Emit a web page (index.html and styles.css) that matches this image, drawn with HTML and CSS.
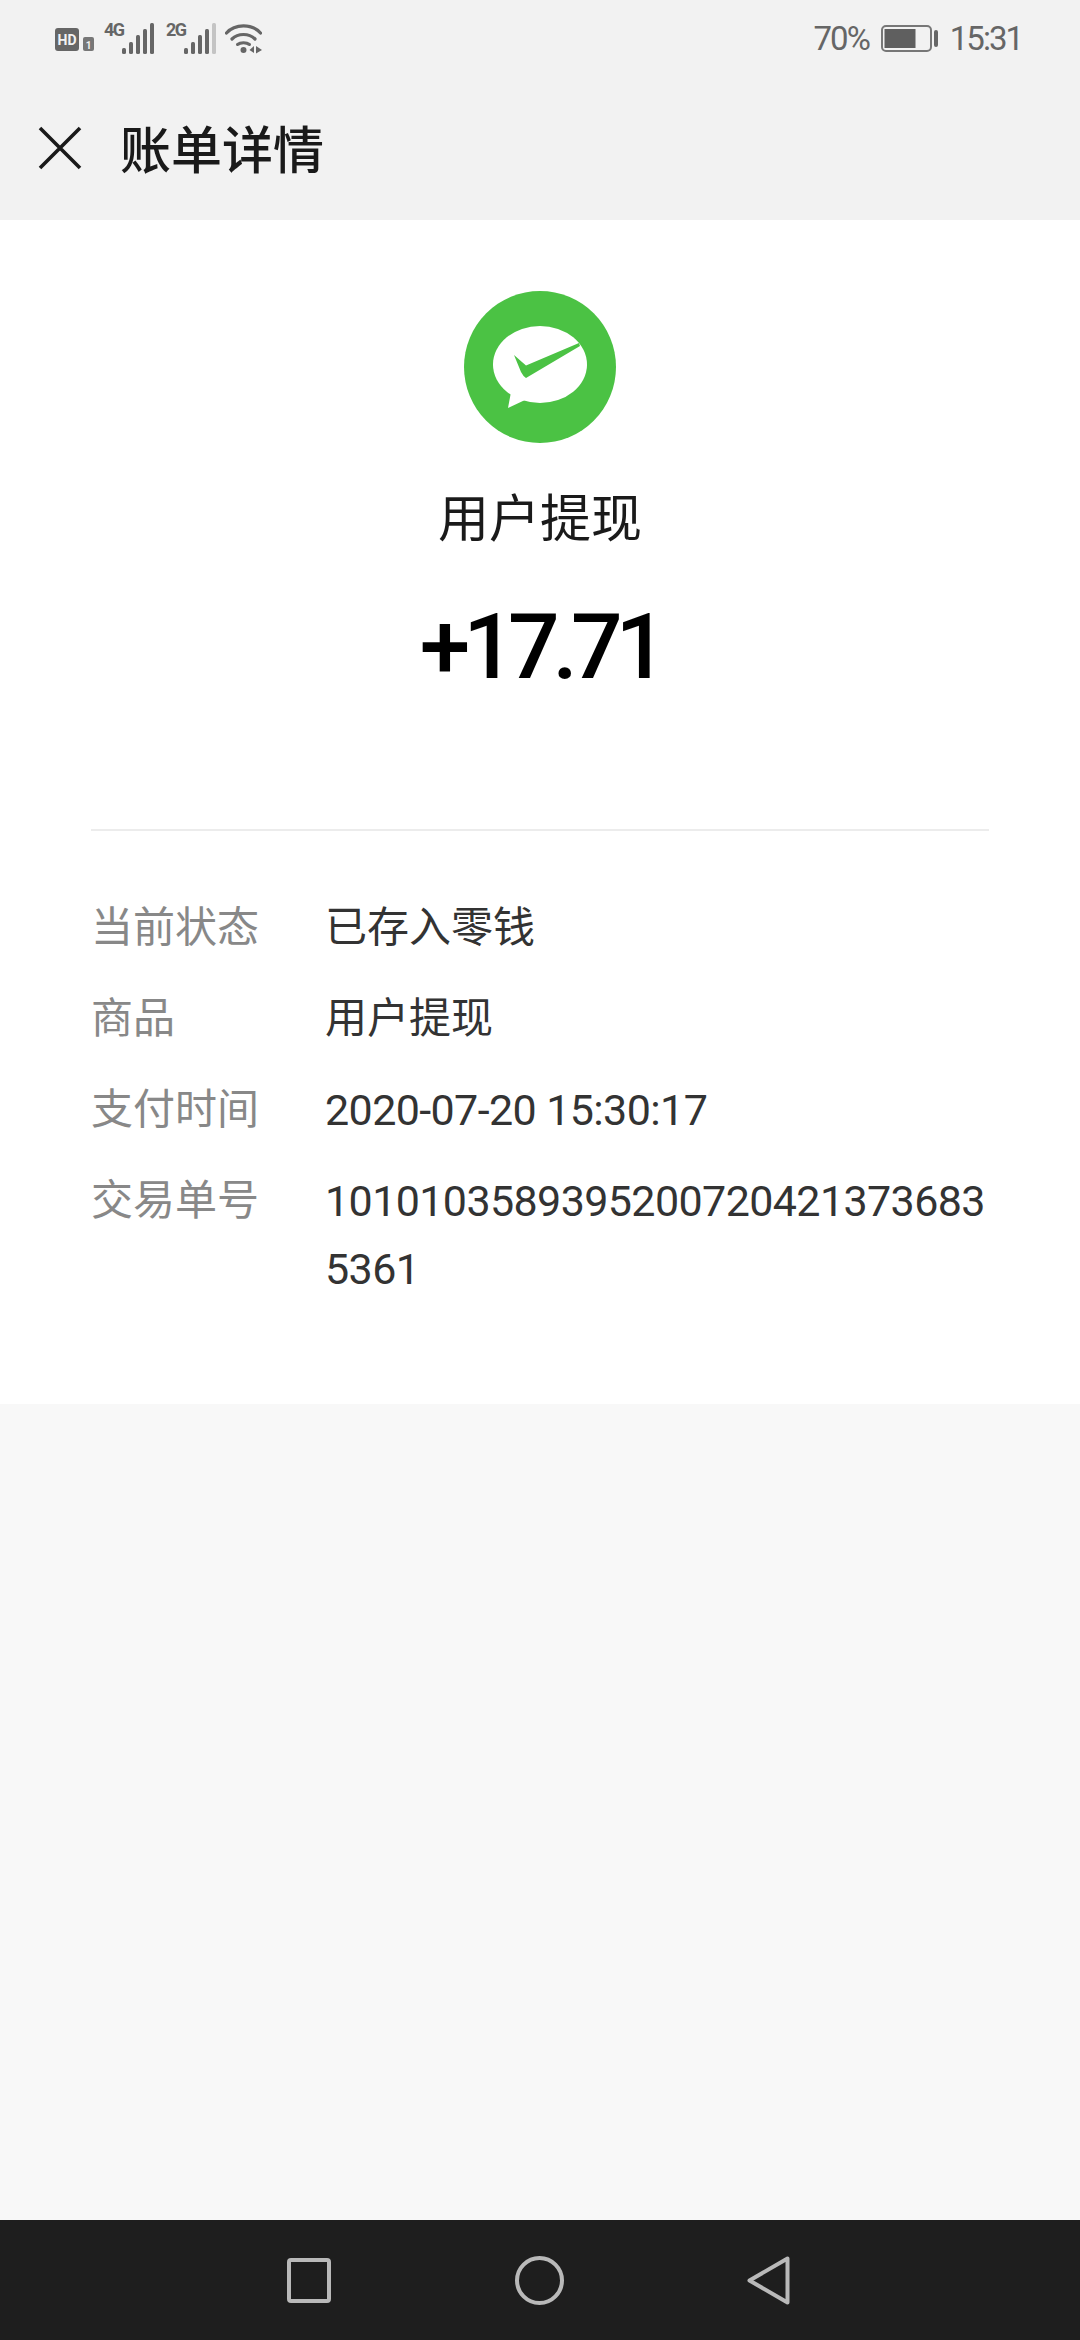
FILE: index.html
```html
<!DOCTYPE html>
<html lang="zh-CN">
<head>
  <meta charset="UTF-8" />
  <meta name="viewport" content="width=device-width, initial-scale=1.0" />
  <title>账单详情</title>
  <link rel="stylesheet" href="styles.css">
</head>
<body>
  <div class="phone">
    <div class="status-bar">
      <div class="status-left">
        <svg class="hd-icon" width="39" height="23" viewBox="0 0 39 23">
          <rect x="0" y="0" width="24" height="23" rx="3" fill="#666" />
          <text x="12" y="16.5" class="hd-text">HD</text>
          <rect x="28" y="9" width="11" height="14" rx="2" fill="#777" />
          <text x="33.5" y="20.5" class="sim-text">1</text>
        </svg>
        <span class="net-label net-4g">4G</span>
        <svg class="signal" width="32" height="31" viewBox="0 0 32 31">
          <rect x="0" y="25" width="4" height="6" rx="1.5" fill="#666" />
          <rect x="7" y="19" width="4" height="12" rx="1.5" fill="#666" />
          <rect x="14" y="12" width="4" height="19" rx="1.5" fill="#666" />
          <rect x="21" y="6" width="4" height="25" rx="1.5" fill="#666" />
          <rect x="28" y="0" width="4" height="31" rx="1.5" fill="#666" />
        </svg>
        <span class="net-label net-2g">2G</span>
        <svg class="signal" width="32" height="31" viewBox="0 0 32 31">
          <rect x="0" y="25" width="4" height="6" rx="1.5" fill="#666" />
          <rect x="7" y="19" width="4" height="12" rx="1.5" fill="#666" />
          <rect x="14" y="12" width="4" height="19" rx="1.5" fill="#666" />
          <rect x="21" y="6" width="4" height="25" rx="1.5" fill="#666" />
          <rect x="28" y="0" width="4" height="31" rx="1.5" fill="#c4c4c4" />
        </svg>
        <svg class="wifi" width="37" height="30" viewBox="0 0 37 30">
          <path d="M1.5 9 C10 -0.5 27 -0.5 35.5 9" fill="none" stroke="#666" stroke-width="3.2" stroke-linecap="round" />
          <path d="M7 15 C13 9 24 9 30 15" fill="none" stroke="#666" stroke-width="3.2" stroke-linecap="round" />
          <path d="M12.5 20.5 C15.5 18 21.5 18 24.5 20.5" fill="none" stroke="#666" stroke-width="3" stroke-linecap="round" />
          <circle cx="18.5" cy="26" r="3" fill="#666" />
          <path d="M29 22 L29 29 L24.5 26 Z M31 29.5 L31 22 L37 26 Z" fill="#666" />
        </svg>
      </div>
      <div class="status-right">
        <span>70%</span>
        <svg class="battery" width="57" height="27" viewBox="0 0 57 27">
          <rect x="1" y="1" width="49" height="25" rx="4" fill="none" stroke="#777" stroke-width="2" />
          <rect x="3.5" y="4" width="31" height="19" fill="#5f5f5f" />
          <rect x="53" y="5" width="4" height="17" rx="2" fill="#666" />
        </svg>
        <span>15:31</span>
      </div>
    </div>

    <header class="title-bar">
      <svg class="close-icon" width="44" height="44" viewBox="0 0 44 44">
        <path d="M2 2 L42 42 M42 2 L2 42" fill="none" stroke="#1a1a1a" stroke-width="3.6" />
      </svg>
      <h1>账单详情</h1>
    </header>

    <main class="bill">
      <div class="summary">
        <svg class="pay-logo" width="152" height="152" viewBox="0 0 152 152">
          <circle cx="76" cy="76" r="76" fill="#4bc244" />
          <ellipse cx="76" cy="73.5" rx="47" ry="38.5" fill="#fff" />
          <path d="M47 101 L44 117 L61 109 Z" fill="#fff" />
          <path d="M50 64 L62 74.5 L115 52 L116 55 L62 87 Q59 85 57 81 Z" fill="#4bc244" />
        </svg>
        <div class="summary-name">用户提现</div>
        <div class="summary-amount">+17.71</div>
      </div>

      <div class="details">
        <div class="detail-row">
          <div class="detail-label">当前状态</div>
          <div class="detail-value">已存入零钱</div>
        </div>
        <div class="detail-row">
          <div class="detail-label">商品</div>
          <div class="detail-value">用户提现</div>
        </div>
        <div class="detail-row">
          <div class="detail-label">支付时间</div>
          <div class="detail-value digits">2020-07-20 15:30:17</div>
        </div>
        <div class="detail-row">
          <div class="detail-label">交易单号</div>
          <div class="detail-value digits">1010103589395200720421373683<br>5361</div>
        </div>
      </div>
    </main>

    <div class="filler"></div>

    <nav class="nav-bar">
      <svg width="44" height="45" viewBox="0 0 44 45">
        <rect x="2" y="2" width="40" height="41" rx="2" fill="none" stroke="#b9b9b9" stroke-width="4" />
      </svg>
      <svg width="49" height="49" viewBox="0 0 49 49">
        <circle cx="24.5" cy="24.5" r="22.5" fill="none" stroke="#b9b9b9" stroke-width="4" />
      </svg>
      <svg width="43" height="49" viewBox="0 0 43 49">
        <path d="M40.5 2.5 L40.5 46.5 L2.5 24.5 Z" fill="none" stroke="#b9b9b9" stroke-width="4" stroke-linejoin="round" />
      </svg>
    </nav>
  </div>
</body>
</html>
```

FILE: styles.css
```css
* {
  box-sizing: border-box;
}
body {
  margin: 0;
  font-family: Roboto, 'Noto Sans CJK SC', sans-serif;
  background-color: #f8f8f8;
}
.phone {
  width: 1080px;
  height: 2340px;
  display: flex;
  flex-direction: column;
}
.status-bar {
  height: 76px;
  padding: 0 58px 0 55px;
  background-color: #f2f2f2;
  display: flex;
  justify-content: space-between;
  align-items: center;
  color: #666;
  font-size: 33px;
  letter-spacing: -2px;
}
.status-left {
  display: flex;
  align-items: flex-end;
  letter-spacing: normal;
}
.status-right {
  display: flex;
  align-items: center;
  gap: 12px;
}
.hd-icon {
  display: block;
  margin-bottom: 3px;
}
.hd-text {
  font: bold 14px Roboto, sans-serif;
  fill: #f2f2f2;
  text-anchor: middle;
}
.sim-text {
  font: bold 10px Roboto, sans-serif;
  fill: #f2f2f2;
  text-anchor: middle;
}
.net-label {
  width: 18px;
  font-size: 18px;
  font-weight: 700;
  letter-spacing: -1.5px;
  color: #666;
  align-self: flex-start;
  line-height: 14px;
}
.net-4g {
  margin-left: 10px;
}
.net-2g {
  margin-left: 12px;
}
.signal {
  display: block;
}
.wifi {
  display: block;
  margin-left: 9px;
}
.title-bar {
  height: 144px;
  padding: 0 38px;
  background-color: #f2f2f2;
  display: flex;
  align-items: center;
  gap: 38px;
}
.close-icon {
  flex-shrink: 0;
}
.title-bar h1 {
  margin: 0 0 2px;
  font-size: 51px;
  font-weight: 500;
  color: #1a1a1a;
}
.bill {
  height: 1184px;
  background-color: #fff;
  padding: 71px 91px 0;
}
.summary {
  display: flex;
  flex-direction: column;
  align-items: center;
  height: 540px;
  border-bottom: 2px solid #ececec;
}
.pay-logo {
  display: block;
}
.summary-name {
  margin-top: 42px;
  font-size: 51px;
  line-height: 70px;
  color: #1a1a1a;
}
.summary-amount {
  margin-top: 42px;
  font-size: 91px;
  line-height: 100px;
  font-weight: 500;
  letter-spacing: -7px;
  color: #000;
}
.details {
  padding-top: 63px;
}
.detail-row {
  display: flex;
  margin-bottom: 23px;
  font-size: 42px;
  line-height: 68px;
}
.detail-label {
  width: 234px;
  flex-shrink: 0;
  color: #888;
}
.detail-value {
  color: #333;
}
.digits {
  font-size: 43px;
  letter-spacing: -0.6px;
}
.filler {
  flex: 1;
  background-color: #f8f8f8;
}
.nav-bar {
  height: 120px;
  background-color: #1e1e1e;
  padding: 0 290px 0 287px;
  display: flex;
  justify-content: space-between;
  align-items: center;
}
```
